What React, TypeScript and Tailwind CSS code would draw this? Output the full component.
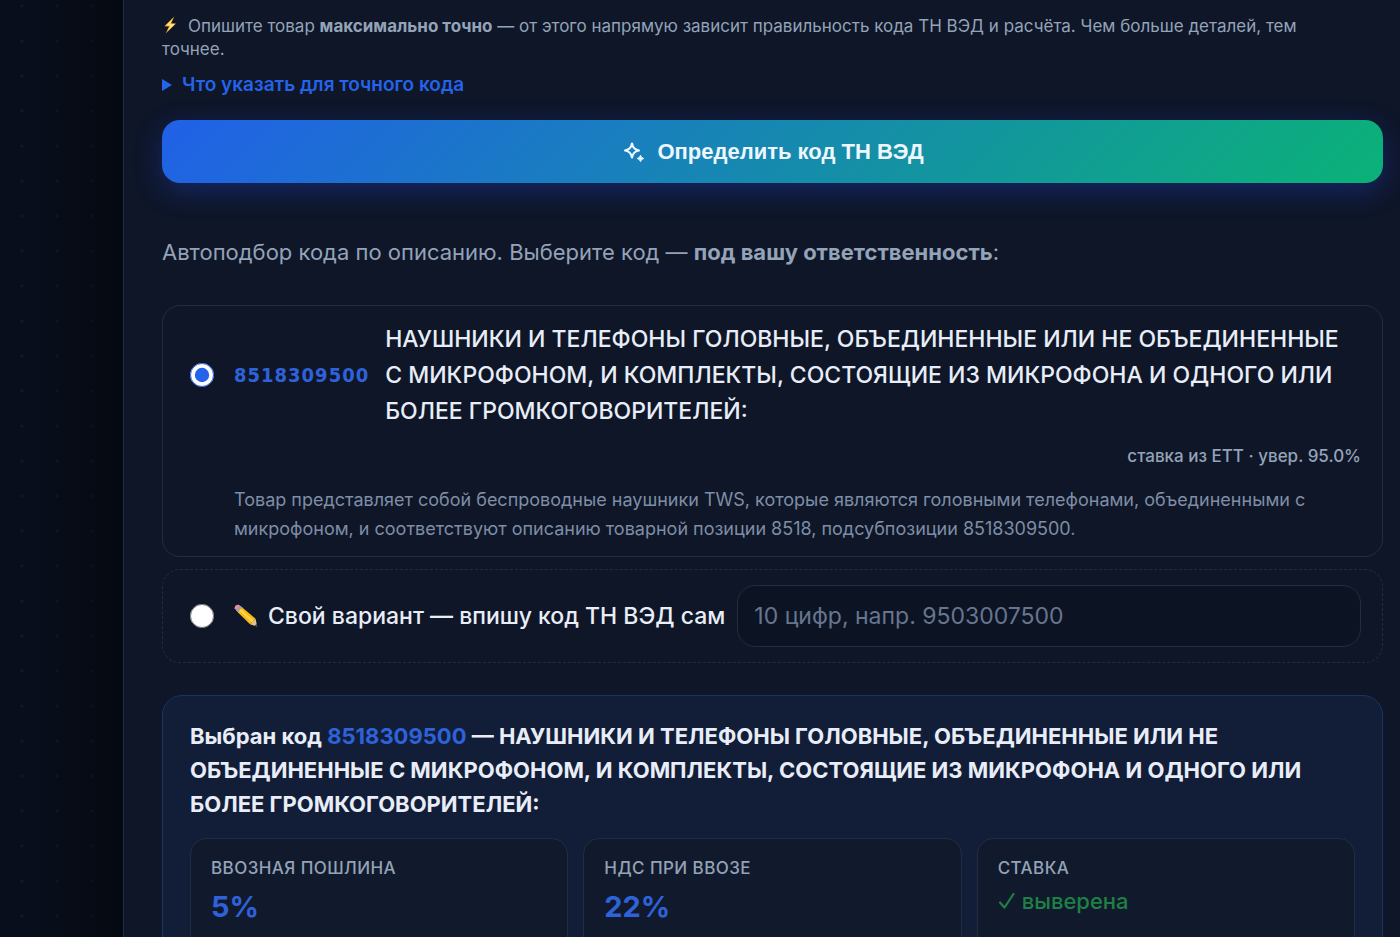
import { useState } from 'react';

interface CodeOption {
  code: string;
  title: string;
  meta: string;
  reason: string;
}

const option: CodeOption = {
  code: '8518309500',
  title:
    'НАУШНИКИ И ТЕЛЕФОНЫ ГОЛОВНЫЕ, ОБЪЕДИНЕННЫЕ ИЛИ НЕ ОБЪЕДИНЕННЫЕ С МИКРОФОНОМ, И КОМПЛЕКТЫ, СОСТОЯЩИЕ ИЗ МИКРОФОНА И ОДНОГО ИЛИ БОЛЕЕ ГРОМКОГОВОРИТЕЛЕЙ:',
  meta: 'ставка из ЕТТ · увер. 95.0%',
  reason:
    'Товар представляет собой беспроводные наушники TWS, которые являются головными телефонами, объединенными с микрофоном, и соответствуют описанию товарной позиции 8518, подсубпозиции 8518309500.',
};

function BoltIcon() {
  return (
    <svg viewBox="0 0 16 18" className="inline-block w-4 h-[18px] mr-2.5 -mt-1" aria-hidden="true">
      <path d="M12.200 0.500 2.400 10.200l4.600.2-3.400 7L14 7.600l-4.800-.4z" fill="#f5a623" />
      <path d="M11.300 2.200 3.800 9.500l4.600.3-3 5.600L12.800 8.200l-4.800-.4z" fill="#fde47a" />
    </svg>
  );
}

function PencilIcon() {
  return (
    <svg viewBox="0 0 24 24" className="w-6 h-6 shrink-0" aria-hidden="true">
      <path d="M.6 4.200C.4 2 2.800.2 5 1l3 2.200L3.300 7.800z" fill="#f08a94" />
      <path d="M5.700 1.600 9 4.100 4.500 8.900 1.900 5.800z" fill="#9aa3ad" />
      <path d="M8.300 3.400 21.600 14.800 16 20.200 3.800 8.200z" fill="#f9b916" />
      <path d="m6.800 5 12.900 11.600-1.800 1.700L5.200 6.600z" fill="#ffd54a" />
      <path d="m21.600 14.800 1.600 7.900L16 20.200z" fill="#e8c08a" />
      <path d="m22.600 20 .6 2.700-2.600-.9z" fill="#333" />
    </svg>
  );
}

function SparkleIcon() {
  return (
    <svg viewBox="0 0 24 24" className="w-6 h-6" fill="none" aria-hidden="true">
      <path
        d="M11 3.500c.9 4.500 2.500 6.100 7 7-4.500.9-6.100 2.500-7 7-.9-4.500-2.500-6.100-7-7 4.500-.9 6.100-2.500 7-7z"
        stroke="currentColor"
        strokeWidth="2.200"
        strokeLinejoin="round"
      />
      <path
        d="M19.500 15.300l1.100 2.100 2.100 1.100-2.100 1.100-1.100 2.100-1.100-2.100-2.100-1.100 2.100-1.100z"
        fill="currentColor"
        stroke="currentColor"
        strokeWidth="1"
        strokeLinejoin="round"
      />
    </svg>
  );
}

function Tile({ label, children }: { label: string; children: React.ReactNode }) {
  return (
    <div className="h-[120px] rounded-2xl border border-[#222d44] bg-[#111a2c] px-5 pt-4">
      <div className="text-[17px] leading-[26px] font-medium tracking-wide text-[#94a3b8]">{label}</div>
      {children}
    </div>
  );
}

export default function App() {
  const [choice, setChoice] = useState('auto');

  return (
    <div className="h-screen overflow-hidden flex bg-[#0e1628] font-['Inter','Liberation_Sans',sans-serif] text-[#e8edf7]">
      <aside className="w-[123px] shrink-0 bg-[linear-gradient(90deg,transparent_30%,rgba(3,5,10,0.6)),radial-gradient(circle_at_22px_6px,#111827_1px,transparent_2px)] bg-[size:100%_100%,35px_35px] bg-[#080e1b]" />

      <main className="flex-1 min-w-0 border-l border-[#1f2e45] pl-[38px] pr-[17px] pt-[15px]">
        <p className="text-[17px] leading-[23px] text-[#94a3b8]">
          <BoltIcon />
          Опишите товар <b className="font-bold">максимально точно</b> — от этого напрямую зависит правильность кода ТН ВЭД и
          расчёта. Чем больше деталей, тем
          <br />
          точнее.
        </p>

        <details className="mt-[10px]">
          <summary className="flex items-center gap-2.5 list-none cursor-pointer text-[19px] leading-7 font-semibold text-[#2563eb]">
            <svg viewBox="0 0 10 12" className="w-2.5 h-3" aria-hidden="true">
              <path d="M0 0 10 6 0 12z" fill="currentColor" />
            </svg>
            Что указать для точного кода
          </summary>
        </details>

        <button
          type="button"
          className="mt-[21px] w-full h-[63px] flex items-center justify-center gap-3 rounded-[18px] bg-[linear-gradient(135deg,#2160e8,#0bb277)] shadow-[0_8px_28px_rgba(37,75,235,0.32)] font-['Liberation_Sans',sans-serif] text-[22px] font-bold text-[#eef6ff]"
        >
          <SparkleIcon />
          Определить код ТН ВЭД
        </button>

        <p className="mt-[52px] text-[22px] leading-[34px] text-[#94a3b8]">
          Автоподбор кода по описанию. Выберите код — <b className="font-bold">под вашу ответственность</b>:
        </p>

        <div className="mt-9 rounded-[18px] border border-[#222d44] pl-[27px] pr-[21px] pt-[15px] pb-[13px]">
          <label className="flex items-center gap-5 cursor-pointer">
            <input
              type="radio"
              name="code"
              checked={choice === 'auto'}
              onChange={() => setChoice('auto')}
              className="w-6 h-6 shrink-0 accent-[#2563eb]"
            />
            <span className="flex items-center gap-4">
              <span className="shrink-0 font-['DejaVu_Sans_Condensed','DejaVu_Sans',sans-serif] text-xl font-bold tracking-wider text-[#2e62da]">
                {option.code}
              </span>
              <span className="text-[23px] leading-9 font-medium">{option.title}</span>
            </span>
          </label>
          <div className="mt-3 text-right text-[17px] leading-[30px] font-medium text-[#94a3b8]">{option.meta}</div>
          <p className="mt-[14px] pl-11 text-lg leading-[29px] text-[#7f8da5]">{option.reason}</p>
        </div>

        <div className="mt-3 flex items-center rounded-[18px] border border-dashed border-[#222d44] pl-[27px] pr-[21px] py-[15px]">
          <label className="flex items-center gap-5 cursor-pointer">
            <input
              type="radio"
              name="code"
              checked={choice === 'custom'}
              onChange={() => setChoice('custom')}
              className="w-6 h-6 shrink-0 accent-[#2563eb]"
            />
            <span className="flex items-center gap-2.5 whitespace-nowrap text-[23px] leading-9 font-medium">
              <PencilIcon />
              Свой вариант — впишу код ТН ВЭД сам
            </span>
          </label>
          <input
            type="text"
            aria-label="Код ТН ВЭД"
            placeholder="10 цифр, напр. 9503007500"
            onFocus={() => setChoice('custom')}
            className="ml-3 flex-1 min-w-0 h-[62px] rounded-[18px] border border-[#222d44] bg-[#0c1424] px-4 text-[23px] placeholder:text-[#68758f] outline-none"
          />
        </div>

        <section className="mt-8 rounded-[20px] border border-[#1b3264] bg-[#121e38] px-[27px] pt-[23px] pb-7">
          <h2 className="text-[22px] leading-[34px] font-bold">
            Выбран код <span className="text-[#2e62da]">{option.code}</span> — {option.title}
          </h2>
          <div className="mt-[17px] grid grid-cols-3 gap-[15px]">
            <Tile label="ВВОЗНАЯ ПОШЛИНА">
              <div className="mt-1 text-[29px] leading-[44px] font-bold text-[#2e62da]">5%</div>
            </Tile>
            <Tile label="НДС ПРИ ВВОЗЕ">
              <div className="mt-1 text-[29px] leading-[44px] font-bold text-[#2e62da]">22%</div>
            </Tile>
            <Tile label="СТАВКА">
              <div className="mt-0.5 flex items-center gap-1.5 text-[22px] leading-9 font-medium text-[#1f8045]">
                <svg viewBox="0 0 18 18" className="w-[18px] h-[18px]" fill="none" aria-hidden="true">
                  <path
                    d="M2 10.500 6.500 15.500 15.500 2"
                    stroke="currentColor"
                    strokeWidth="2.200"
                    strokeLinecap="round"
                    strokeLinejoin="round"
                  />
                </svg>
                выверена
              </div>
            </Tile>
          </div>
        </section>
      </main>
    </div>
  );
}
